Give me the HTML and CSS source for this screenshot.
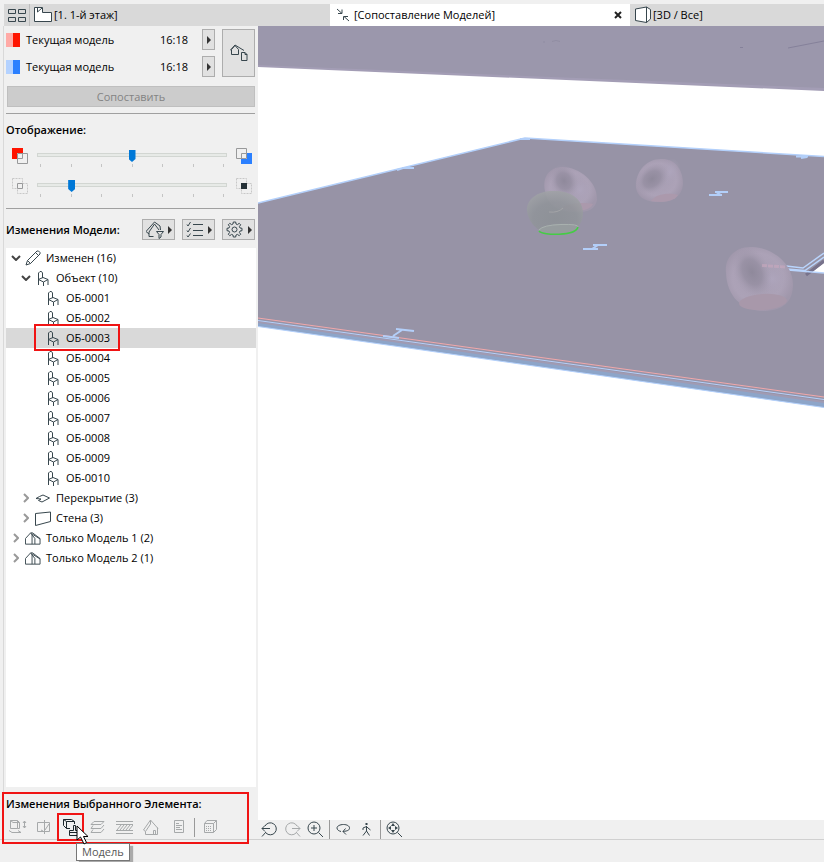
FILE: index.html
```
<!DOCTYPE html>
<html lang="ru">

<head>
    <meta charset="UTF-8">
    <meta name="viewport" content="width=device-width, initial-scale=1.0">
    <title>Сопоставление Моделей</title>
    <link rel="stylesheet" href="styles.css">
</head>

<body>
    <!-- shared icons -->
    <svg class="sprite" aria-hidden="true">
        <symbol id="chair" viewBox="0 0 12 15">
            <path d="M1.500 14V2L3 .5H4.500L5.500 2V7M1.500 8.500L6 6.500L11 8.500V14M1.500 8.500L6.500 11L11 8.500M6.500 11V15" />
        </symbol>
        <symbol id="house" viewBox="0 0 17 13">
            <path d="M.5 12.500V6.500L6 .5L10.500 6.500V12.500ZM6 .5H8L16 6.500V12.500H10.500M7.500 1V12.500M8 2L16 7" />
        </symbol>
        <symbol id="open" viewBox="0 0 10 6">
            <path d="M1 1L5 5L9 1" />
        </symbol>
        <symbol id="closed" viewBox="0 0 6 10">
            <path d="M1 1L5 5L1 9" />
        </symbol>
        <symbol id="arrow" viewBox="0 0 4 8">
            <path d="M0 0L4 4L0 8Z" />
        </symbol>
    </svg>

    <div class="tabs">
        <button class="tab-grid" aria-label="Обзор вкладок">
            <svg class="icon" width="19" height="15"><path d="M.5 1.500H7.500V5.500H.5ZM10.500 1.500H17.500V5.500H10.500ZM.5 9.500H7.500V13.500H.5ZM10.500 9.500H17.500V13.500H10.500Z" /></svg>
        </button>
        <button class="tab tab-plan">
            <svg class="icon" width="19" height="16"><path class="paper" d="M.5 .5H8.500V5.500H17.500V14.500H.5Z" /><path d="M3.500 1V5L8 1" /></svg>
            <span>[1. 1-й этаж]</span>
        </button>
        <div class="tab-active">
            <button class="tab">
                <svg class="icon" width="14" height="14"><path d="M1 1L6 5.500M6 1.500V5.500H2M13 13L8 8.500M7.500 12V8.500H12" /></svg>
                <span>[Сопоставление Моделей]</span>
            </button>
            <button class="close" aria-label="Закрыть"><svg class="icon" width="8" height="8"><path d="M1 1L7 7M7 1L1 7" /></svg></button>
        </div>
        <button class="tab tab-3d">
            <svg class="icon" width="17" height="18"><path class="paper" d="M.5 3L11.500 1V16.500L.5 14.500Z" /><path class="paper" d="M11.500 1L15.500 3.500V13L11.500 16.500Z" /></svg>
            <span>[3D / Все]</span>
        </button>
    </div>

    <div class="main">
        <div class="sidebar">
            <div class="compare">
                <div class="models">
                    <div class="model">
                        <span class="swatch red"></span>
                        <span class="model-name">Текущая модель</span>
                        <span>16:18</span>
                        <button class="btn btn-arrow" aria-label="Выбрать модель 1"><svg class="arrow"><use href="#arrow" /></svg></button>
                    </div>
                    <div class="model">
                        <span class="swatch blue"></span>
                        <span class="model-name">Текущая модель</span>
                        <span>16:18</span>
                        <button class="btn btn-arrow" aria-label="Выбрать модель 2"><svg class="arrow"><use href="#arrow" /></svg></button>
                    </div>
                </div>
                <button class="btn btn-swap" aria-label="Модели">
                    <svg class="icon" width="18" height="18"><path d="M1.500 10.500V5.500L5 1.500L8.500 5.500V10.500ZM0 6.500L5 1L14 6.500M11.500 8.500H15L17 10.500V16.500H11.500ZM15 8.500V10.500H17" /></svg>
                </button>
            </div>
            <button class="btn btn-compare" disabled>Сопоставить</button>

            <div class="display">
                <h4>Отображение:</h4>
                <div class="slider-row">
                    <svg width="16" height="16"><path fill="#ff1400" d="M0 0H11V5H5V11H0Z" /><path class="gray-line" d="M5.500 5.500H15.500V15.500H5.500ZM5.500 10.500H10.500V5.500" /></svg>
                    <div class="slider">
                        <input type="range" min="0" max="6" value="3" aria-label="Баланс моделей">
                        <div class="ticks"><i></i><i></i><i></i><i></i><i></i><i></i><i></i></div>
                    </div>
                    <svg width="16" height="16"><path fill="#2b80ff" d="M11 5H16V16H5V11H11Z" /><path class="gray-line" d="M.5 .5H10.500V10.500H.5ZM5.500 10.500V5.500H10.500" /></svg>
                </div>
                <div class="slider-row">
                    <svg width="16" height="16"><path class="dash-line" d="M.5 .5H10.500V5M.5 .5V10.500H5M10.500 5.500H15.500V15.500H5.500V10.500" /><path class="gray-line" d="M5.500 5.500H10.500V10.500H5.500Z" /></svg>
                    <div class="slider">
                        <input type="range" min="0" max="6" value="1" aria-label="Прозрачность неизмененных">
                        <div class="ticks"><i></i><i></i><i></i><i></i><i></i><i></i><i></i></div>
                    </div>
                    <svg width="16" height="16"><path class="dash-line" d="M.5 .5H10.500V5M.5 .5V10.500H5M10.500 5.500H15.500V15.500H5.500V10.500" /><path fill="#263238" d="M5 5H11V11H5Z" /></svg>
                </div>
            </div>

            <div class="changes-head">
                <h4>Изменения Модели:</h4>
                <button class="btn btn-menu" aria-label="Фильтр">
                    <svg class="icon" width="18" height="18"><path d="M3 15.500V11L8.500 3L13 9M0 10.500L8.500 1L14 5L14.500 9M3 15.500H7.500M0 10.500L3 13M10.500 10.500H17.500L15 13.500V16L13 17.500V13.500Z" /></svg>
                    <svg class="arrow"><use href="#arrow" /></svg>
                </button>
                <button class="btn btn-menu" aria-label="Список">
                    <svg class="icon" width="18" height="16"><path d="M7 2.500H17M7 8.500H17M7 13.500H17M1 2.500L2 4L4.500 0M1 8.500L2 10L4.500 6M1 13.500L2 15L4.500 11.500" /></svg>
                    <svg class="arrow"><use href="#arrow" /></svg>
                </button>
                <button class="btn btn-menu" aria-label="Настройки">
                    <svg class="icon" width="18" height="17"><circle cx="8.500" cy="8.500" r="2.500" /><path d="M7 3L7.300 1H9.700L10 3L11.500 3.600L13.200 2.300L14.700 3.800L13.400 5.500L14 7L16 7.300V9.700L14 10L13.400 11.500L14.700 13.200L13.200 14.700L11.500 13.400L10 14L9.700 16H7.300L7 14L5.500 13.400L3.800 14.700L2.300 13.200L3.600 11.500L3 10L1 9.700V7.300L3 7L3.600 5.500L2.300 3.800L3.800 2.300L5.500 3.600Z" /></svg>
                    <svg class="arrow"><use href="#arrow" /></svg>
                </button>
            </div>

            <ul class="tree">
                <li>
                    <div class="row">
                        <button class="toggle opened" aria-label="Свернуть"><svg width="10" height="6"><use href="#open" /></svg></button>
                        <svg class="icon" width="16" height="16"><path d="M1 15L2.500 10.500L12 1H13.500L15 2.500V4L5.500 13.500ZM2.500 10.500L5.500 13.500M10.500 2.500L13.500 5.500" /></svg>
                        <span>Изменен (16)</span>
                    </div>
                    <ul>
                        <li>
                            <div class="row">
                                <button class="toggle opened" aria-label="Свернуть"><svg width="10" height="6"><use href="#open" /></svg></button>
                                <svg class="icon" width="16" height="15"><use href="#chair" /></svg>
                                <span>Объект (10)</span>
                            </div>
                            <ul class="items">
                                <li class="row"><svg class="icon" width="14" height="15"><use href="#chair" /></svg><span>ОБ-0001</span></li>
                                <li class="row"><svg class="icon" width="14" height="15"><use href="#chair" /></svg><span>ОБ-0002</span></li>
                                <li class="row selected"><svg class="icon" width="14" height="15"><use href="#chair" /></svg><span>ОБ-0003</span></li>
                                <li class="row"><svg class="icon" width="14" height="15"><use href="#chair" /></svg><span>ОБ-0004</span></li>
                                <li class="row"><svg class="icon" width="14" height="15"><use href="#chair" /></svg><span>ОБ-0005</span></li>
                                <li class="row"><svg class="icon" width="14" height="15"><use href="#chair" /></svg><span>ОБ-0006</span></li>
                                <li class="row"><svg class="icon" width="14" height="15"><use href="#chair" /></svg><span>ОБ-0007</span></li>
                                <li class="row"><svg class="icon" width="14" height="15"><use href="#chair" /></svg><span>ОБ-0008</span></li>
                                <li class="row"><svg class="icon" width="14" height="15"><use href="#chair" /></svg><span>ОБ-0009</span></li>
                                <li class="row"><svg class="icon" width="14" height="15"><use href="#chair" /></svg><span>ОБ-0010</span></li>
                            </ul>
                        </li>
                        <li class="row">
                            <button class="toggle" aria-label="Развернуть"><svg width="6" height="10"><use href="#closed" /></svg></button>
                            <svg class="icon" width="16" height="9"><path d="M1 4.500L4.500 2.500L8 1L14.500 4L7 8L3.500 6.500L6 5L1 4.500" /></svg>
                            <span>Перекрытие (3)</span>
                        </li>
                        <li class="row">
                            <button class="toggle" aria-label="Развернуть"><svg width="6" height="10"><use href="#closed" /></svg></button>
                            <svg class="icon" width="16" height="15"><path d="M.5 2.500L15.500 1V10.500L.5 14.500Z" /></svg>
                            <span>Стена (3)</span>
                        </li>
                    </ul>
                </li>
                <li class="row">
                    <button class="toggle" aria-label="Развернуть"><svg width="6" height="10"><use href="#closed" /></svg></button>
                    <svg class="icon" width="16" height="13"><use href="#house" /></svg>
                    <span>Только Модель 1 (2)</span>
                </li>
                <li class="row">
                    <button class="toggle" aria-label="Развернуть"><svg width="6" height="10"><use href="#closed" /></svg></button>
                    <svg class="icon" width="16" height="13"><use href="#house" /></svg>
                    <span>Только Модель 2 (1)</span>
                </li>
            </ul>

            <div class="element">
                <h4>Изменения Выбранного Элемента:</h4>
                <div class="element-tools">
                    <button aria-label="Положение" disabled><svg class="icon" width="18" height="16"><path d="M1.500 1.500H8.500V9.500H1.500ZM1.500 1.500L4 3.500M4 3.500H10.500V9.500H8.500M8.500 1.500L10.500 3.500M0 11.500L3 13.500H12L9 11.500M15.500 2V9M14 4L15.500 2L17 4M14 7L15.500 9L17 7" /></svg></button>
                    <button aria-label="Геометрия" disabled><svg class="icon" width="14" height="14"><path d="M.5 2.500H12.500V11.500H.5ZM7.500 0V14M4 10L6 11M8 10L12 4" /></svg></button>
                    <button class="current" aria-label="Модель"><svg class="icon" width="18" height="18"><path d="M8 10.500H4.500L1.500 7.500V1.500H9.500L12.500 3.500V6M1.500 1.500L4.500 3.500H12.500M4.500 3.500V10.500M11.500 7.500H13.500V12.500H16.500V17.500H7.500V12.500H11.500ZM7.500 14.500H16.500" /></svg></button>
                    <button aria-label="Слои" disabled><svg class="icon" width="15" height="14"><path d="M4 1.500H14L11 4.500H1ZM3 5.500L1 8.500H11L14 5M3 9.500L1 12.500H11L14 9" /></svg></button>
                    <button aria-label="Штриховка" disabled><svg class="icon" width="17" height="13"><path d="M0 .5H17M0 3.500H17M0 9.500H17M0 12.500H17M1 9L5 4M4 9L8 4M7 9L11 4M10 9L14 4M13 9L17 4" /></svg></button>
                    <button aria-label="Здание" disabled><svg class="icon" width="17" height="16"><path d="M7.500 1L.5 11L2.500 12.500L7.500 5V1L15 9.500M14.500 8.500V15.500H2.500V12.500M10.500 15V11.500H12.500V15" /></svg></button>
                    <button aria-label="Свойства" disabled><svg class="icon" width="12" height="14"><path d="M1.500 .5H10.500V12.500H1.500ZM3 3.500H6M3 5.500H9M3 7.500H7M3 9.500H9" /></svg></button>
                    <span class="divider"></span>
                    <button aria-label="Прочее" disabled><svg class="icon" width="14" height="14"><path d="M.5 3.500H9.500V12.500H.5ZM.5 3.500L3 .5H12.500V9.500L9.500 12.500M9.500 3.500L12.500 .5" /><path stroke-dasharray="1 1" d="M2 6.500H8M2 8.500H8M2 10.500H8" /></svg></button>
                    <svg class="cursor" width="14" height="20"><path d="M1 1V15L4.500 12L8 19L10.500 17.500L7.500 11.500H12Z" /></svg>
                    <span class="tooltip" role="tooltip">Модель</span>
                </div>
            </div>
        </div>

        <div class="view">
            <svg class="scene" viewBox="258 26 566 794" preserveAspectRatio="xMinYMin slice">
                <defs>
                    <radialGradient id="shell" cx="48%" cy="48%" r="54%">
                        <stop offset="0" stop-color="#a69db2" />
                        <stop offset=".7" stop-color="#aca2b7" />
                        <stop offset="1" stop-color="#a097ab" />
                    </radialGradient>
                    <radialGradient id="hollow">
                        <stop offset="0" stop-color="#8f899b" />
                        <stop offset=".5" stop-color="#958ea1" stop-opacity=".8" />
                        <stop offset="1" stop-color="#a59cb0" stop-opacity="0" />
                    </radialGradient>
                    <radialGradient id="shine">
                        <stop offset="0" stop-color="#aea5bc" />
                        <stop offset="1" stop-color="#a89fb5" stop-opacity="0" />
                    </radialGradient>
                    <radialGradient id="ghost" cx="50%" cy="65%" r="65%">
                        <stop offset="0" stop-color="#8c9195" />
                        <stop offset=".6" stop-color="#909499" />
                        <stop offset="1" stop-color="#9fa2a5" />
                    </radialGradient>
                </defs>

                <!-- ceiling -->
                <path fill="#a39db5" d="M258 26H824V91L258 67Z" />
                <path fill="#9b97ac" d="M258 26H824V88L258 65Z" />
                <path fill="none" stroke="#85819a" d="M788 48L824 41M740 47.500H743" />
                <path fill="none" stroke="#8b879c" stroke-opacity=".6" d="M544 41V43M552 41.500L556 40.500L560 41.500" />

                <!-- floor slab -->
                <path fill="#9793a6" d="M258 203L525 138L824 156.500V406L258 326Z" />
                <path fill="none" stroke="#b3d0fb" stroke-width="1.500" d="M258 203L525 138L824 156.500" />
                <path fill="#8da5c9" d="M258 322.500L824 402V407.500L258 326.500Z" />
                <path fill="none" stroke="#a09bb3" stroke-width="2" d="M258 322L824 402" />
                <path fill="none" stroke="#b3d0fb" d="M258 326.500L824 407.500M258 320.500L824 399.500" />
                <path fill="none" stroke="#f1a8aa" d="M258 318L824 397" />

                <!-- beam marks -->
                <g fill="none" stroke="#b3cff9" stroke-width="2">
                    <path d="M520 139H530M397 170L403 168M402 168L414 168M796 156.500H808M801 158L807 157" />
                    <path d="M715 192H728M709 195H722M716 195L721 192" />
                    <path d="M593 245H607M583 249H598M592 249L598 245" />
                    <path d="M396 329L414 331M383 336L399 338M393 336L402 330" />
                </g>

                <!-- opening at the right edge -->
                <path fill="#fff" d="M824 263L812 272L824 273Z" />
                <path fill="none" stroke="#77728b" stroke-width="3" d="M806 275L824 261" />
                <path fill="none" stroke="#b9d4fc" stroke-width="1.500" d="M786 266L803 268L824 253M787 269L805 270.500L824 257M788 270L824 273" />

                <!-- armchairs -->
                <g>
                    <path fill="url(#shell)" d="M545 191C542 177 549 167 563 167C579 167 598 182 597 200C595 210 587 213 571 212C556 211 547 204 545 191Z" />
                    <ellipse fill="url(#shine)" cx="580" cy="190" rx="13" ry="13" />
                    <ellipse fill="url(#hollow)" cx="564" cy="181" rx="14" ry="17" transform="rotate(-25 564 181)" />
                    <path fill="#ab99ac" d="M562 208C565 203 583 202 593 204C590 211 576 213 562 208Z" />
                </g>
                <g>
                    <path fill="url(#shell)" d="M636 184C637 170 647 159 661 159C674 158 683 169 683 183C683 196 672 203 657 202C644 202 635 195 636 184Z" />
                    <ellipse fill="url(#shine)" cx="670" cy="172" rx="10" ry="14" transform="rotate(20 670 172)" />
                    <ellipse fill="url(#hollow)" cx="652" cy="179" rx="19" ry="14" transform="rotate(-40 652 179)" />
                    <path fill="#ab99ac" d="M651 201C655 194 669 192 678 195C674 202 662 203 651 201Z" />
                </g>
                <g>
                    <path fill="url(#shell)" d="M726 273C724 256 737 246 753 247C775 248 793 266 793 284C793 302 783 311 763 311C741 310 727 296 726 273Z" />
                    <ellipse fill="url(#shine)" cx="772" cy="279" rx="18" ry="15" />
                    <ellipse fill="url(#hollow)" cx="752" cy="272" rx="18" ry="27" transform="rotate(-25 752 272)" />
                    <ellipse fill="#a898aa" cx="763" cy="302" rx="24" ry="8" transform="rotate(-4 763 302)" />
                    <path fill="none" stroke="#c9a9be" stroke-width="3" stroke-opacity=".6" stroke-dasharray="5 1" d="M762 265.500L786 267" />
                </g>
                <!-- selected armchair -->
                <g>
                    <path fill="url(#ghost)" fill-opacity=".85" d="M527 211C526 198 540 190 555 191C573 191 583 201 583 213C583 225 575 233 559 234C540 236 529 224 527 211Z" />
                    <ellipse fill="#969c9e" cx="558" cy="229" rx="20" ry="5" transform="rotate(-4 558 229)" />
                    <path fill="none" stroke="#a9b1af" d="M539 230Q543 225 561 224.500T578 227" />
                    <path fill="none" stroke="#45cc45" stroke-width="1.500" d="M539 231C543 236 576 236 578 227" />
                    <path fill="none" stroke="#a3a4a7" d="M549 212Q558 213 563 208" />
                </g>
            </svg>
            <div class="nav">
                <button aria-label="Предыдущий вид"><svg class="icon" width="17" height="17"><path d="M4 5A6 6 0 1 1 5 12M1 7.500H9M4 4.500L1 7.500L4 10.500M5 11L1 15.500" /></svg></button>
                <button aria-label="Следующий вид" disabled><svg class="icon" width="17" height="17"><path d="M13 5A6 6 0 1 0 12 12M8 7.500H16M13 4.500L16 7.500L13 10.500M12 11L16 15.500" /></svg></button>
                <button aria-label="Увеличить"><svg class="icon" width="17" height="17"><circle cx="7" cy="7" r="6" /><path d="M4 7H10M7 4V10M11.500 11.500L16 16" /></svg></button>
                <span class="divider"></span>
                <button aria-label="Орбита"><svg class="icon" width="15" height="13"><path d="M5 8.500C3 8 1 7 1 5C1 3 4 1.500 7.500 1.500C11 1.500 13.500 3 13.500 5C13.500 7 12 8 7 8.500M9.500 5.500L7 8.500L10 11.500" /></svg></button>
                <button aria-label="Прогулка"><svg class="icon" width="11" height="13"><path stroke-width="2" d="M5.500 0V2" /><path d="M5.500 3V8L2 12.500M5.500 8L8.500 12.500M2 7V5L5.500 3.500L7 5L9.500 7" /></svg></button>
                <span class="divider"></span>
                <button aria-label="Показать всё"><svg class="icon" width="17" height="17"><circle cx="7" cy="7" r="6" /><path fill="#37464d" stroke="none" d="M5 5L7 2L9 5ZM5 9L7 12L9 9ZM5 5L2 7L5 9ZM9 5L12 7L9 9Z" /><path d="M11.500 11.500L16 16" /></svg></button>
            </div>
        </div>
    </div>
    <div class="status"></div>
</body>

</html>
```
FILE: styles.css
```
*,
*::after {
    box-sizing: border-box;
}

body {
    margin: 0;
    padding-top: 4px;
    height: 100vh;
    display: flex;
    flex-direction: column;
    overflow: hidden;
    background: #f0f0f0;
    color: #000;
    font-family: "Open Sans", "Noto Sans", sans-serif;
    font-size: 11px;
    line-height: 16px;
}

button {
    display: flex;
    align-items: center;
    padding: 0;
    border: none;
    background: none;
    color: inherit;
    font: inherit;
}

h4 {
    margin: 0;
    font-size: 11px;
    font-weight: 600;
}

ul {
    margin: 0;
    padding: 0;
    list-style: none;
}

svg {
    display: block;
    flex: none;
}

.sprite {
    position: absolute;
    width: 0;
    height: 0;
}

.icon {
    fill: none;
    stroke: #37464d;
}

.icon .paper {
    fill: #fff;
}

.arrow {
    width: 4px;
    height: 8px;
    fill: #333;
}

/* tabs */
.tabs {
    display: flex;
    flex: none;
    height: 22px;
    margin-left: 4px;
    background: #d9d9d9;
}

.tab-grid {
    width: 26px;
    padding-left: 4px;
    border-right: 1px solid #bdbdbd;
}

.tab {
    gap: 1px;
    padding-left: 4px;
}

.tab-plan,
.tab-active {
    width: 300px;
}

.tab-active {
    display: flex;
    justify-content: space-between;
    padding-right: 8px;
    background: #fff;
}

.tab-active .tab {
    gap: 4px;
    padding-left: 6px;
}

.tab-3d {
    padding-left: 5px;
}

.close .icon {
    stroke: #222;
    stroke-width: 2;
}

.main {
    flex: 1;
    display: flex;
    min-height: 0;
    border-bottom: 1px solid #d0d0d0;
}

/* left palette */
.sidebar {
    flex: none;
    width: 255px;
    margin-left: 3px;
    padding-left: 2px;
    display: flex;
    flex-direction: column;
    border-left: 1px solid #d9d9d9;
}

.btn {
    justify-content: center;
    border: 1px solid #adadad;
    background: #e1e1e1;
}

.compare {
    display: flex;
    gap: 7px;
    padding: 3px 3px 0 0;
}

.models {
    flex: 1;
    display: flex;
    flex-direction: column;
    gap: 6px;
}

.model {
    display: flex;
    align-items: center;
    height: 21px;
}

.model-name {
    flex: 1;
    margin-left: 6px;
}

.swatch {
    width: 14px;
    height: 14px;
}

.red {
    background: linear-gradient(90deg, #ffaaa6 50%, #ff1400 50%);
}

.blue {
    background: linear-gradient(90deg, #b4d2ff 50%, #2b80ff 50%);
}

.btn-arrow {
    width: 13px;
    height: 21px;
    margin-left: 14px;
}

.btn-swap {
    width: 33px;
}

.btn-compare {
    flex: none;
    height: 21px;
    margin: 9px 3px 6px 1px;
    background: #ccc;
    border-color: #bfbfbf;
    color: #838383;
}

.display {
    margin-right: 3px;
    padding: 8px 0 10px;
    border-top: 1px solid #a0a0a0;
    border-bottom: 1px solid #a0a0a0;
}

.slider-row {
    display: flex;
    gap: 9px;
    height: 20px;
    padding: 0 3px 0 6px;
    margin-top: 10px;
}

.slider {
    flex: 1;
    margin-top: 1px;
}

.slider input {
    display: block;
    width: 100%;
    height: 12px;
    margin: 0;
    appearance: none;
    background: none;
}

.slider input::-webkit-slider-runnable-track {
    height: 4px;
    border: 1px solid #d2d6d2;
    background: #e7eae7;
}

.slider input::-webkit-slider-thumb {
    appearance: none;
    width: 7px;
    height: 12px;
    margin-top: -4px;
    background: #0078d7;
    clip-path: polygon(0 0, 100% 0, 100% 75%, 50% 100%, 0 75%);
}

.ticks {
    display: flex;
    justify-content: space-between;
    margin-top: 3px;
    padding: 0 3px;
}

.ticks i {
    width: 1px;
    height: 3px;
    background: #c4c4c4;
}

.gray-line {
    fill: none;
    stroke: #98999a;
}

.dash-line {
    fill: none;
    stroke: #c8c8c8;
    stroke-dasharray: 2 1;
}

.changes-head {
    display: flex;
    align-items: center;
    gap: 7px;
    padding: 10px 3px 8px 0;
}

.changes-head h4 {
    flex: 1;
}

.btn-menu {
    gap: 4px;
    width: 33px;
    height: 21px;
}

/* tree */
.tree {
    flex: 1;
    margin-right: 2px;
    background: #fff;
}

.row {
    position: relative;
    display: flex;
    align-items: center;
    gap: 5px;
    height: 20px;
    padding-left: 5px;
}

.tree ul .row {
    padding-left: 15px;
}

.tree .items .row {
    gap: 6px;
    padding-left: 40px;
}

.toggle {
    justify-content: center;
    width: 10px;
    height: 20px;
    fill: none;
    stroke: #999;
    stroke-width: 2;
}

.opened {
    stroke: #444;
}

.toggle + .icon {
    margin-left: -1px;
}

.selected {
    background: #d9d9d9;
}

.selected::after {
    content: "";
    position: absolute;
    left: 28px;
    top: -4px;
    width: 86px;
    height: 27px;
    border: 2px solid #f01414;
}

/* changes of the selected element */
.element {
    position: relative;
    height: 52px;
    padding-top: 9px;
}

.element::after {
    content: "";
    position: absolute;
    left: -4px;
    right: 9px;
    top: 5px;
    bottom: -5px;
    border: 2px solid #f01414;
    pointer-events: none;
}

.element-tools {
    position: relative;
    display: flex;
    align-items: center;
    height: 28px;
    margin-top: 1px;
}

.element-tools button {
    justify-content: center;
    width: 27px;
    height: 28px;
}

.element-tools button:first-child {
    width: 24px;
}

button:disabled .icon {
    stroke: #a6a9aa;
}

.element-tools .current {
    border: 2px solid #f01414;
}

.divider {
    width: 1px;
    height: 19px;
    background: #999;
}

.element-tools .divider {
    margin: 0 2px;
}

.current .icon {
    stroke: #1b262b;
}

.cursor {
    position: absolute;
    left: 70px;
    top: 12px;
    z-index: 3;
    fill: #fff;
    stroke: #000;
}

.tooltip {
    position: absolute;
    left: 70px;
    top: 30px;
    z-index: 2;
    padding: 0 5px;
    border: 1px solid #767676;
    background: #fff;
    color: #575757;
    box-shadow: 3px 3px 1px #aaa;
}

/* model view */
.view {
    flex: 1;
    min-width: 0;
    display: flex;
    flex-direction: column;
}

.scene {
    flex: 1;
    width: 100%;
    min-height: 0;
    background: #fff;
}

.nav {
    display: flex;
    align-items: center;
    height: 19px;
}

.nav button {
    justify-content: center;
    width: 23px;
    height: 19px;
}

.nav .divider {
    margin: 0 2px;
}

.status {
    flex: none;
    height: 22px;
}
```
